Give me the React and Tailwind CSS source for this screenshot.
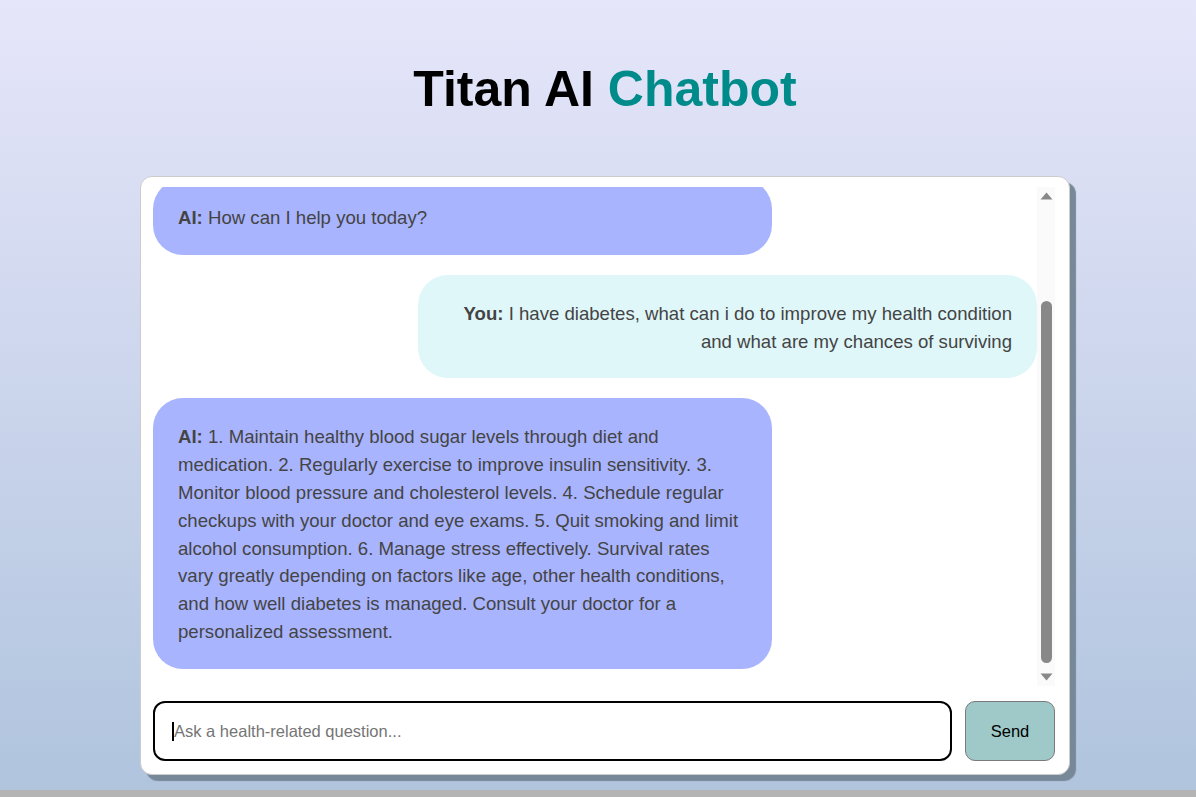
import { useEffect, useRef, useState } from "react";

const messages = [
  { from: "ai", text: "How can I help you today?" },
  {
    from: "user",
    text: "I have diabetes, what can i do to improve my health condition and what are my chances of surviving",
  },
  {
    from: "ai",
    text: "1. Maintain healthy blood sugar levels through diet and medication. 2. Regularly exercise to improve insulin sensitivity. 3. Monitor blood pressure and cholesterol levels. 4. Schedule regular checkups with your doctor and eye exams. 5. Quit smoking and limit alcohol consumption. 6. Manage stress effectively. Survival rates vary greatly depending on factors like age, other health conditions, and how well diabetes is managed. Consult your doctor for a personalized assessment.",
  },
];

function Bubble({ from, text }) {
  const isUser = from === "user";
  return (
    <div
      className={
        isUser
          ? "self-end w-[619px] rounded-[30px] bg-[#e0f7fa] px-[25px] pt-[25px] pb-[23px] text-right"
          : "self-start w-[619px] rounded-[30px] bg-[#a9b4ff] px-[25px] pt-[25px] pb-[23px]"
      }
    >
      <p className="text-[18.6px] leading-[27.8px] text-[#444]">
        <strong className="font-bold">{isUser ? "You:" : "AI:"}</strong> {text}
      </p>
    </div>
  );
}

// drawn scrollbar, the headless browser hides native ones
function ScrollTrack() {
  return (
    <div className="w-[18px] shrink-0 flex flex-col bg-[#fafafa]">
      <div className="h-[18px] flex items-center justify-center">
        <svg width="13" height="8" viewBox="0 0 13 8">
          <path d="M6.5 0.5 L12.5 7.5 L0.5 7.5 Z" fill="#888" />
        </svg>
      </div>
      <div className="flex-1 flex flex-col justify-end items-center pb-[5px]">
        <div className="w-[11px] h-[362px] rounded-full bg-[#888]"></div>
      </div>
      <div className="h-[18px] flex items-center justify-center">
        <svg width="13" height="8" viewBox="0 0 13 8">
          <path d="M0.5 0.5 L12.5 0.5 L6.5 7.5 Z" fill="#888" />
        </svg>
      </div>
    </div>
  );
}

export default function App() {
  const [input, setInput] = useState("");
  const listRef = useRef(null);

  useEffect(() => {
    if (listRef.current) listRef.current.scrollTop = listRef.current.scrollHeight;
  }, []);

  return (
    <div className="h-[797px] overflow-hidden flex flex-col font-['Liberation_Sans',Arial,sans-serif]">
      <div className="flex-1 bg-linear-to-b from-[#e6e6fa] to-[#b0c4de]">
        <div className="w-[930px] ml-[140px] flex flex-col">
          <h1 className="pt-[61px] text-center text-[50px] leading-[56px] font-bold text-black">
            Titan AI <span className="text-[#008b8b]">Chatbot</span>
          </h1>

          <div className="mt-[59px] h-[599px] flex flex-col bg-white border border-[#cccccc] rounded-[12px] shadow-[6px_6px_1px_#778899] pt-[10px] pl-3 pr-[14px] pb-[13px]">
            <div className="h-[499px] flex">
              <div ref={listRef} className="flex-1 overflow-hidden">
                <div className="flex flex-col gap-5 pt-[137px] pb-[17px]">
                  {messages.map((m, i) => (
                    <Bubble key={i} from={m.from} text={m.text} />
                  ))}
                </div>
              </div>
              <ScrollTrack />
            </div>

            <div className="mt-[15px] h-[60px] flex gap-[13px]">
              <div className="relative flex-1 h-full">
                <input
                  value={input}
                  onChange={(e) => setInput(e.target.value)}
                  placeholder="Ask a health-related question..."
                  className="w-full h-full border-2 border-black rounded-[12px] pl-[19px] text-[16.5px] text-black placeholder:text-[#757575] outline-none"
                />
                {input === "" && (
                  <span className="absolute left-[19px] top-[21px] w-[2px] h-[19px] bg-black"></span>
                )}
              </div>
              <button className="w-[90px] h-full bg-[#9ec9c8] border border-[#7a7a7a] rounded-[10px] text-[16.5px] text-black">
                Send
              </button>
            </div>
          </div>
        </div>
      </div>
      <div className="h-[7px] bg-[#b4b4b4]"></div>
    </div>
  );
}
